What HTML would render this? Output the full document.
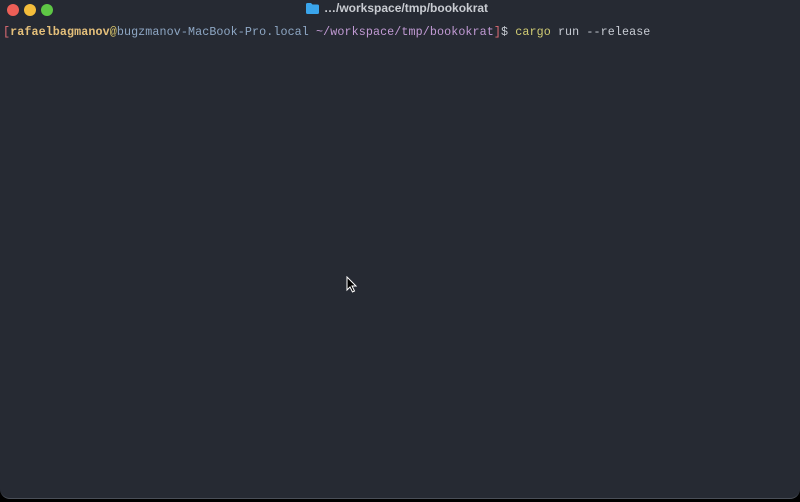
<!DOCTYPE html>
<html><head><style>
html,body{margin:0;padding:0;background:#000;width:800px;height:502px;overflow:hidden}
.win{position:absolute;left:0;top:0;width:800px;height:498px;background:#262a33;border-radius:0 0 10px 10px;border-bottom:1px solid #4a4f58}
.dot{position:absolute;top:4px;width:12px;height:12px;border-radius:50%}
.title{position:absolute;top:1px;left:324px;font:bold 12px "Liberation Sans",sans-serif;color:#c9ccd2}
.line{position:absolute;left:3px;top:24px;font:11.7px/16px "Liberation Mono",monospace;letter-spacing:0.1px;white-space:pre;color:#c8ccd4}
</style></head><body>
<div class="win">
<div class="dot" style="left:7px;background:#ed5f57"></div>
<div class="dot" style="left:24px;background:#f4bd3b"></div>
<div class="dot" style="left:41px;background:#5ec745"></div>
<svg style="position:absolute;left:306px;top:3px" width="13" height="11"><path d="M0 1.5Q0 0 1.5 0H5L6.5 1.5H11.5Q13 1.5 13 3V9.5Q13 11 11.5 11H1.5Q0 11 0 9.5Z" fill="#3aa5ec"/></svg>
<div class="title">…/workspace/tmp/bookokrat</div>
<div class="line"><span style="color:#e06c75">[</span><span style="color:#e5c07b;font-weight:bold">rafaelbagmanov</span><span style="color:#d7c36a">@</span><span style="color:#8ea7c4">bugzmanov-MacBook-Pro.local</span> <span style="color:#c19ad4">~/workspace/tmp/bookokrat</span><span style="color:#e06c75">]</span>$ <span style="color:#d2cd74">cargo</span> run --release</div>
<svg style="position:absolute;left:346px;top:276px" width="12" height="17"><path d="M1 1V14L4 11L6.5 16L8.5 15L6 10H10Z" fill="#000" stroke="#fff" stroke-width="1"/></svg>
</div>
</body></html>
